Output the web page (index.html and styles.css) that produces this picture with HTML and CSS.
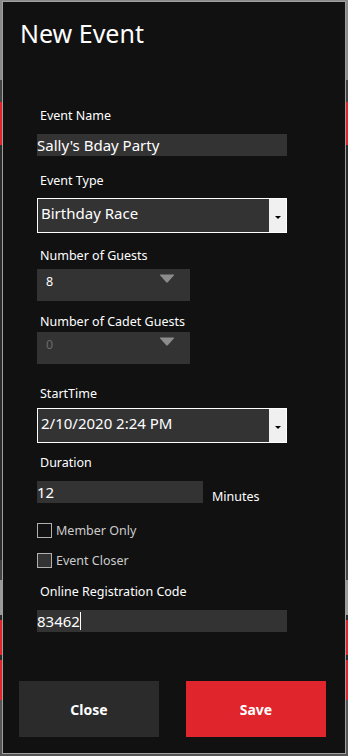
FILE: index.html
```html
<!DOCTYPE html>
<html lang="en">
<head>
  <meta charset="UTF-8">
  <meta name="viewport" content="width=device-width, initial-scale=1.0">
  <title>New Event</title>
  <link rel="stylesheet" href="styles.css">
</head>
<body>
  <div class="dialog">
    <h1 class="title">New Event</h1>

    <div class="form">
      <div class="field field-name">
        <label>Event Name</label>
        <div class="textbox">Sally's Bday Party</div>
      </div>

      <div class="field field-type">
        <label>Event Type</label>
        <div class="combo">
          <span class="combo-text">Birthday Race</span>
          <span class="combo-btn">
            <svg width="6" height="3" viewBox="0 0 6 3"><path d="M0 0H6L3 3Z" fill="#000"/></svg>
          </span>
        </div>
      </div>

      <div class="field field-guests">
        <label>Number of Guests</label>
        <div class="spin">
          <span class="spin-value">8</span>
          <svg class="spin-arrow" width="16" height="9" viewBox="0 0 16 9"><path d="M1.5 0.5H14.5Q15.5 0.5 14.8 1.4L9 8Q8 9 7 8L1.2 1.4Q0.5 0.5 1.5 0.5Z" fill="#8c8c8c"/></svg>
        </div>
      </div>

      <div class="field field-cadet">
        <label>Number of Cadet Guests</label>
        <div class="spin disabled">
          <span class="spin-value">0</span>
          <svg class="spin-arrow" width="16" height="9" viewBox="0 0 16 9"><path d="M1.5 0.5H14.5Q15.5 0.5 14.8 1.4L9 8Q8 9 7 8L1.2 1.4Q0.5 0.5 1.5 0.5Z" fill="#8c8c8c"/></svg>
        </div>
      </div>

      <div class="field field-start">
        <label>StartTime</label>
        <div class="combo">
          <span class="combo-text">2/10/2020 2:24 PM</span>
          <span class="combo-btn">
            <svg width="6" height="3" viewBox="0 0 6 3"><path d="M0 0H6L3 3Z" fill="#000"/></svg>
          </span>
        </div>
      </div>

      <div class="field field-duration">
        <label>Duration</label>
        <div class="duration-row">
          <div class="textbox short">12</div>
          <span class="unit">Minutes</span>
        </div>
      </div>

      <div class="check check-member">
        <span class="box"></span>
        <span>Member Only</span>
      </div>

      <div class="check check-closer">
        <span class="box filled"></span>
        <span>Event Closer</span>
      </div>

      <div class="field field-code">
        <label>Online Registration Code</label>
        <div class="textbox">83462<span class="caret"></span></div>
      </div>
    </div>

    <div class="buttons">
      <button class="btn btn-close">Close</button>
      <button class="btn btn-save">Save</button>
    </div>
  </div>
</body>
</html>
```

FILE: styles.css
```css
body {
  margin: 0;
  width: 348px;
  height: 756px;
  overflow: hidden;
  font-family: 'Noto Sans', 'Open Sans', sans-serif;
  color: #fff;
  background:
    linear-gradient(to bottom,
      #8a8a8a 0, #8a8a8a 80px,
      #444 80px, #444 102px,
      #e0252d 102px, #e0252d 145px,
      #2a2a2a 145px, #2a2a2a 560px,
      #444 560px, #444 580px,
      #9a9a9a 580px, #9a9a9a 615px,
      #2a2a2a 615px, #2a2a2a 620px,
      #e0252d 620px, #e0252d 655px,
      #2a2a2a 655px, #2a2a2a 660px,
      #e0252d 660px, #e0252d 700px,
      #555 700px);
  padding: 1px 2px 2px 2px;
  box-sizing: border-box;
}

.dialog {
  height: 753px;
  box-sizing: border-box;
  border: 1px solid #a0a0a0;
  background: #111;
  display: flex;
  flex-direction: column;
}

.title {
  margin: 0;
  padding: 14px 0 0 17px;
  font-size: 25px;
  font-weight: 400;
  line-height: 34px;
  height: 34px;
}

.form {
  padding-left: 34px;
  display: flex;
  flex-direction: column;
}

.field label {
  display: block;
  font-size: 12.5px;
  line-height: 16px;
  padding-left: 3px;
}

.field-name { margin-top: 58px; }
.field-name label { margin-bottom: 10px; }
.field-type { margin-top: 17px; }
.field-type label { margin-bottom: 9px; }
.field-guests { margin-top: 15px; }
.field-guests label { margin-bottom: 5px; }
.field-cadet { margin-top: 13px; }
.field-cadet label { margin-bottom: 2px; }
.field-start { margin-top: 22px; }
.field-start label { margin-bottom: 6px; }
.field-duration { margin-top: 12px; }
.field-duration label { margin-bottom: 10px; }
.field-code { margin-top: 16px; }
.field-code label { margin-bottom: 10px; }

.textbox {
  width: 250px;
  height: 22px;
  background: #333;
  font-size: 15px;
  line-height: 22px;
  white-space: nowrap;
  display: flex;
  align-items: center;
}

.textbox.short {
  width: 166px;
}

.caret {
  width: 1px;
  height: 18px;
  background: #fff;
}

.combo {
  width: 250px;
  height: 35px;
  box-sizing: border-box;
  border: 1px solid #fff;
  background: #333;
  display: flex;
}

.combo-text {
  flex: 1;
  font-size: 15px;
  line-height: 20px;
  padding: 4px 0 0 3px;
}

.combo-btn {
  width: 17px;
  background: #f0f0f0;
  display: flex;
  align-items: center;
  justify-content: center;
  padding-top: 4px;
}

.spin {
  width: 153px;
  height: 32px;
  background: #333;
  display: flex;
  justify-content: space-between;
  align-items: flex-start;
}

.spin-value {
  font-size: 12.5px;
  line-height: 16px;
  padding: 5px 0 0 9px;
}

.spin.disabled .spin-value {
  color: #6a6a6a;
}

.spin-arrow {
  margin: 5px 15px 0 0;
}

.duration-row {
  display: flex;
  align-items: flex-end;
  gap: 9px;
}

.unit {
  font-size: 12.5px;
  line-height: 16px;
  margin-bottom: -2px;
}

.check {
  display: flex;
  align-items: center;
  gap: 4px;
  font-size: 12.5px;
  color: #ccc;
  height: 15px;
}

.check-member { margin-top: 20px; }
.check-closer { margin-top: 15px; }

.box {
  width: 15px;
  height: 15px;
  box-sizing: border-box;
  border: 1px solid #b0b0b0;
}

.box.filled {
  background: #333;
}

.buttons {
  margin-top: auto;
  margin-bottom: 16px;
  display: flex;
  justify-content: space-between;
  padding: 0 19px 0 16px;
}

.btn {
  width: 140px;
  height: 56px;
  border: none;
  color: #fff;
  font-family: 'Noto Sans', 'Open Sans', sans-serif;
  font-size: 14px;
  font-weight: 700;
}

.btn-close {
  background: #2b2b2b;
}

.btn-save {
  background: #e0252d;
}
```
